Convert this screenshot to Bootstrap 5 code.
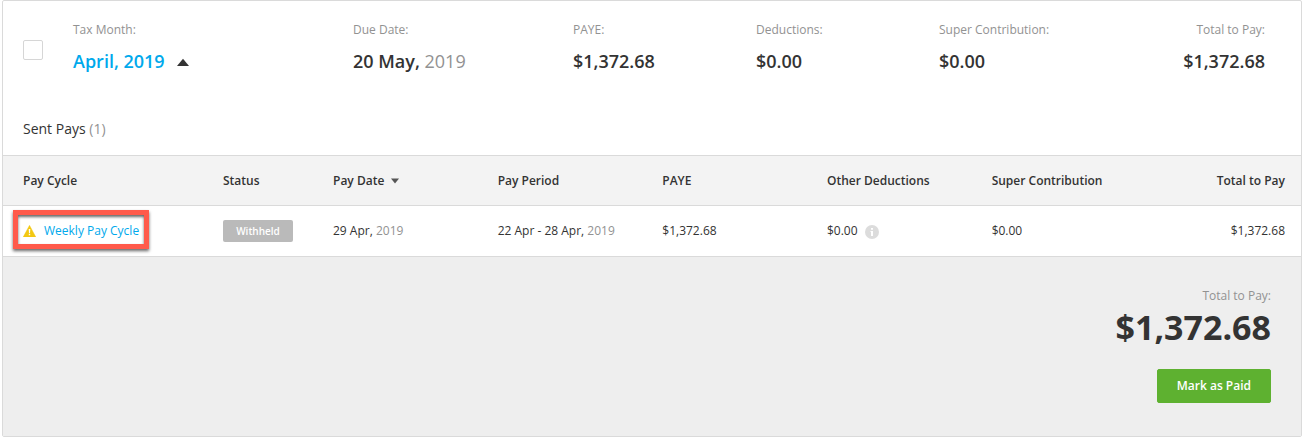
<!DOCTYPE html>
<html lang="en">
<head>
<meta charset="utf-8">
<meta name="viewport" content="width=device-width, initial-scale=1">
<title>Tax month</title>
<link rel="stylesheet" href="https://cdn.jsdelivr.net/npm/bootstrap@5.3.0/dist/css/bootstrap.min.css">
<style>
  body { font-family: "Open Sans", sans-serif; font-size: 12px; line-height: 18px; color: #333; background: #fff; }
  .tax-panel { margin: 0 2px; border: 1px solid #dadada; border-radius: 2px; }
  .muted { color: #929292; }
  a { color: #00a9ec; text-decoration: none; }
  .summary { display: grid; grid-template-columns: 50px 280px 220px 183fr 183fr 183fr 143fr; padding: 20px 36px 0 20px; }
  .summary .form-check-input { width: 20px; height: 20px; margin: 19px 0 0; border: 1px solid #d6d6d6; border-radius: 2px; }
  .amount { font-size: 18px; line-height: 24px; font-weight: 600; margin-top: 10px; }
  .amount .muted { font-weight: 400; }
  .toggle { color: #333; }
  .sent { font-size: 14px; line-height: 20px; padding: 0 20px; margin: 46px 0 16px; font-weight: 400; }
  .pays { table-layout: fixed; --bs-table-color: #333; color: #333; border-color: #dadada; }
  .pays > :not(caption) > * > * { height: 51px; padding: 0 0 0 20px; border-bottom: 1px solid #dadada; vertical-align: middle; }
  .pays > thead > tr > th { height: 50px; background: #f3f3f3; border-top: 1px solid #dadada; font-weight: 600; }
  .pays > * > tr > :last-child { padding-right: 16px; }
  .w-cycle { width: 200px; }
  .w-status { width: 110px; }
  .highlight { border: 5px solid #ff5a4b; padding: 7px 5px 4px; margin: 0 0 3px -10px; box-shadow: 0 2px 3px rgba(0,0,0,.6), inset 0 2px 3px rgba(0,0,0,.6); gap: 8px; }
  .status-tag { width: 70px; height: 22px; line-height: 22px; padding: 0; font-size: 10px; font-weight: 600; background: #bababa; border-radius: 2px; }
  .total-bar { background: #eee; padding: 30px 30px 33px; }
  .grand { font-size: 34px; line-height: 44px; font-weight: 700; margin-bottom: 20px; }
  .btn-paid { --bs-btn-color: #fff; --bs-btn-bg: #5eb130; --bs-btn-border-color: #5eb130; --bs-btn-hover-color: #fff; --bs-btn-hover-bg: #529c2a; --bs-btn-hover-border-color: #529c2a; font-size: 12px; line-height: 18px; font-weight: 600; padding: 7px 19px; border-radius: 2px; }
</style>
</head>
<body>
<main class="tax-panel">
  <section class="summary">
    <div><input class="form-check-input d-block" type="checkbox" id="pick" aria-label="Select April, 2019"></div>
    <div>
      <div class="muted">Tax Month:</div>
      <div class="amount"><a href="#pays">April, 2019</a><a class="toggle ms-2 ps-1" href="#pays" aria-label="Collapse"><svg class="align-baseline" width="12" height="10" viewBox="0 0 12 10" aria-hidden="true"><path d="M0 8 6 0.800 12 8z" fill="currentColor"/></svg></a></div>
    </div>
    <div><div class="muted">Due Date:</div><div class="amount">20 May, <span class="muted">2019</span></div></div>
    <div><div class="muted">PAYE:</div><div class="amount">$1,372.68</div></div>
    <div><div class="muted">Deductions:</div><div class="amount">$0.00</div></div>
    <div><div class="muted">Super Contribution:</div><div class="amount">$0.00</div></div>
    <div class="text-end"><div class="muted">Total to Pay:</div><div class="amount">$1,372.68</div></div>
  </section>

  <h2 class="sent">Sent Pays <span class="muted">(1)</span></h2>

  <table class="table pays mb-0" id="pays">
    <thead>
      <tr>
        <th class="w-cycle" scope="col">Pay Cycle</th>
        <th class="w-status" scope="col">Status</th>
        <th scope="col">Pay Date <svg class="ms-1" width="8" height="6" viewBox="0 0 8 6" aria-hidden="true"><path d="M0 0.500H8L4 5.500z" fill="#555"/></svg></th>
        <th scope="col">Pay Period</th>
        <th scope="col">PAYE</th>
        <th scope="col">Other Deductions</th>
        <th scope="col">Super Contribution</th>
        <th class="text-end" scope="col">Total to Pay</th>
      </tr>
    </thead>
    <tbody>
      <tr>
        <td><span class="highlight d-inline-flex align-items-center align-middle text-nowrap"><svg width="13" height="12" viewBox="0 0 13 12" role="img" aria-label="Warning"><path d="M6.500 0.300 12.800 12H0.200z" fill="#f3c812" stroke="#f3c812" stroke-width=".4" stroke-linejoin="round"/><path d="M5.700 4h1.600l-.3 4H6zM5.800 8.800h1.400v1.400H5.800z" fill="#fff"/></svg><a href="#pays">Weekly Pay Cycle</a></span></td>
        <td><span class="badge status-tag align-middle">Withheld</span></td>
        <td>29 Apr, <span class="muted">2019</span></td>
        <td>22 Apr - 28 Apr, <span class="muted">2019</span></td>
        <td>$1,372.68</td>
        <td>$0.00 <svg class="ms-1 align-middle" width="14" height="14" viewBox="0 0 14 14" role="img" aria-label="Information"><circle cx="7" cy="7" r="7" fill="#dcdcdc"/><path d="M6 3h2v1.800H6zM5.500 6H8v5H6V7h-.5z" fill="#fff"/></svg></td>
        <td>$0.00</td>
        <td class="text-end">$1,372.68</td>
      </tr>
    </tbody>
  </table>

  <section class="total-bar text-end">
    <div class="muted">Total to Pay:</div>
    <div class="grand">$1,372.68</div>
    <button class="btn btn-paid" type="button">Mark as Paid</button>
  </section>
</main>
<script src="https://cdn.jsdelivr.net/npm/bootstrap@5.3.0/dist/js/bootstrap.bundle.min.js"></script>
</body>
</html>
